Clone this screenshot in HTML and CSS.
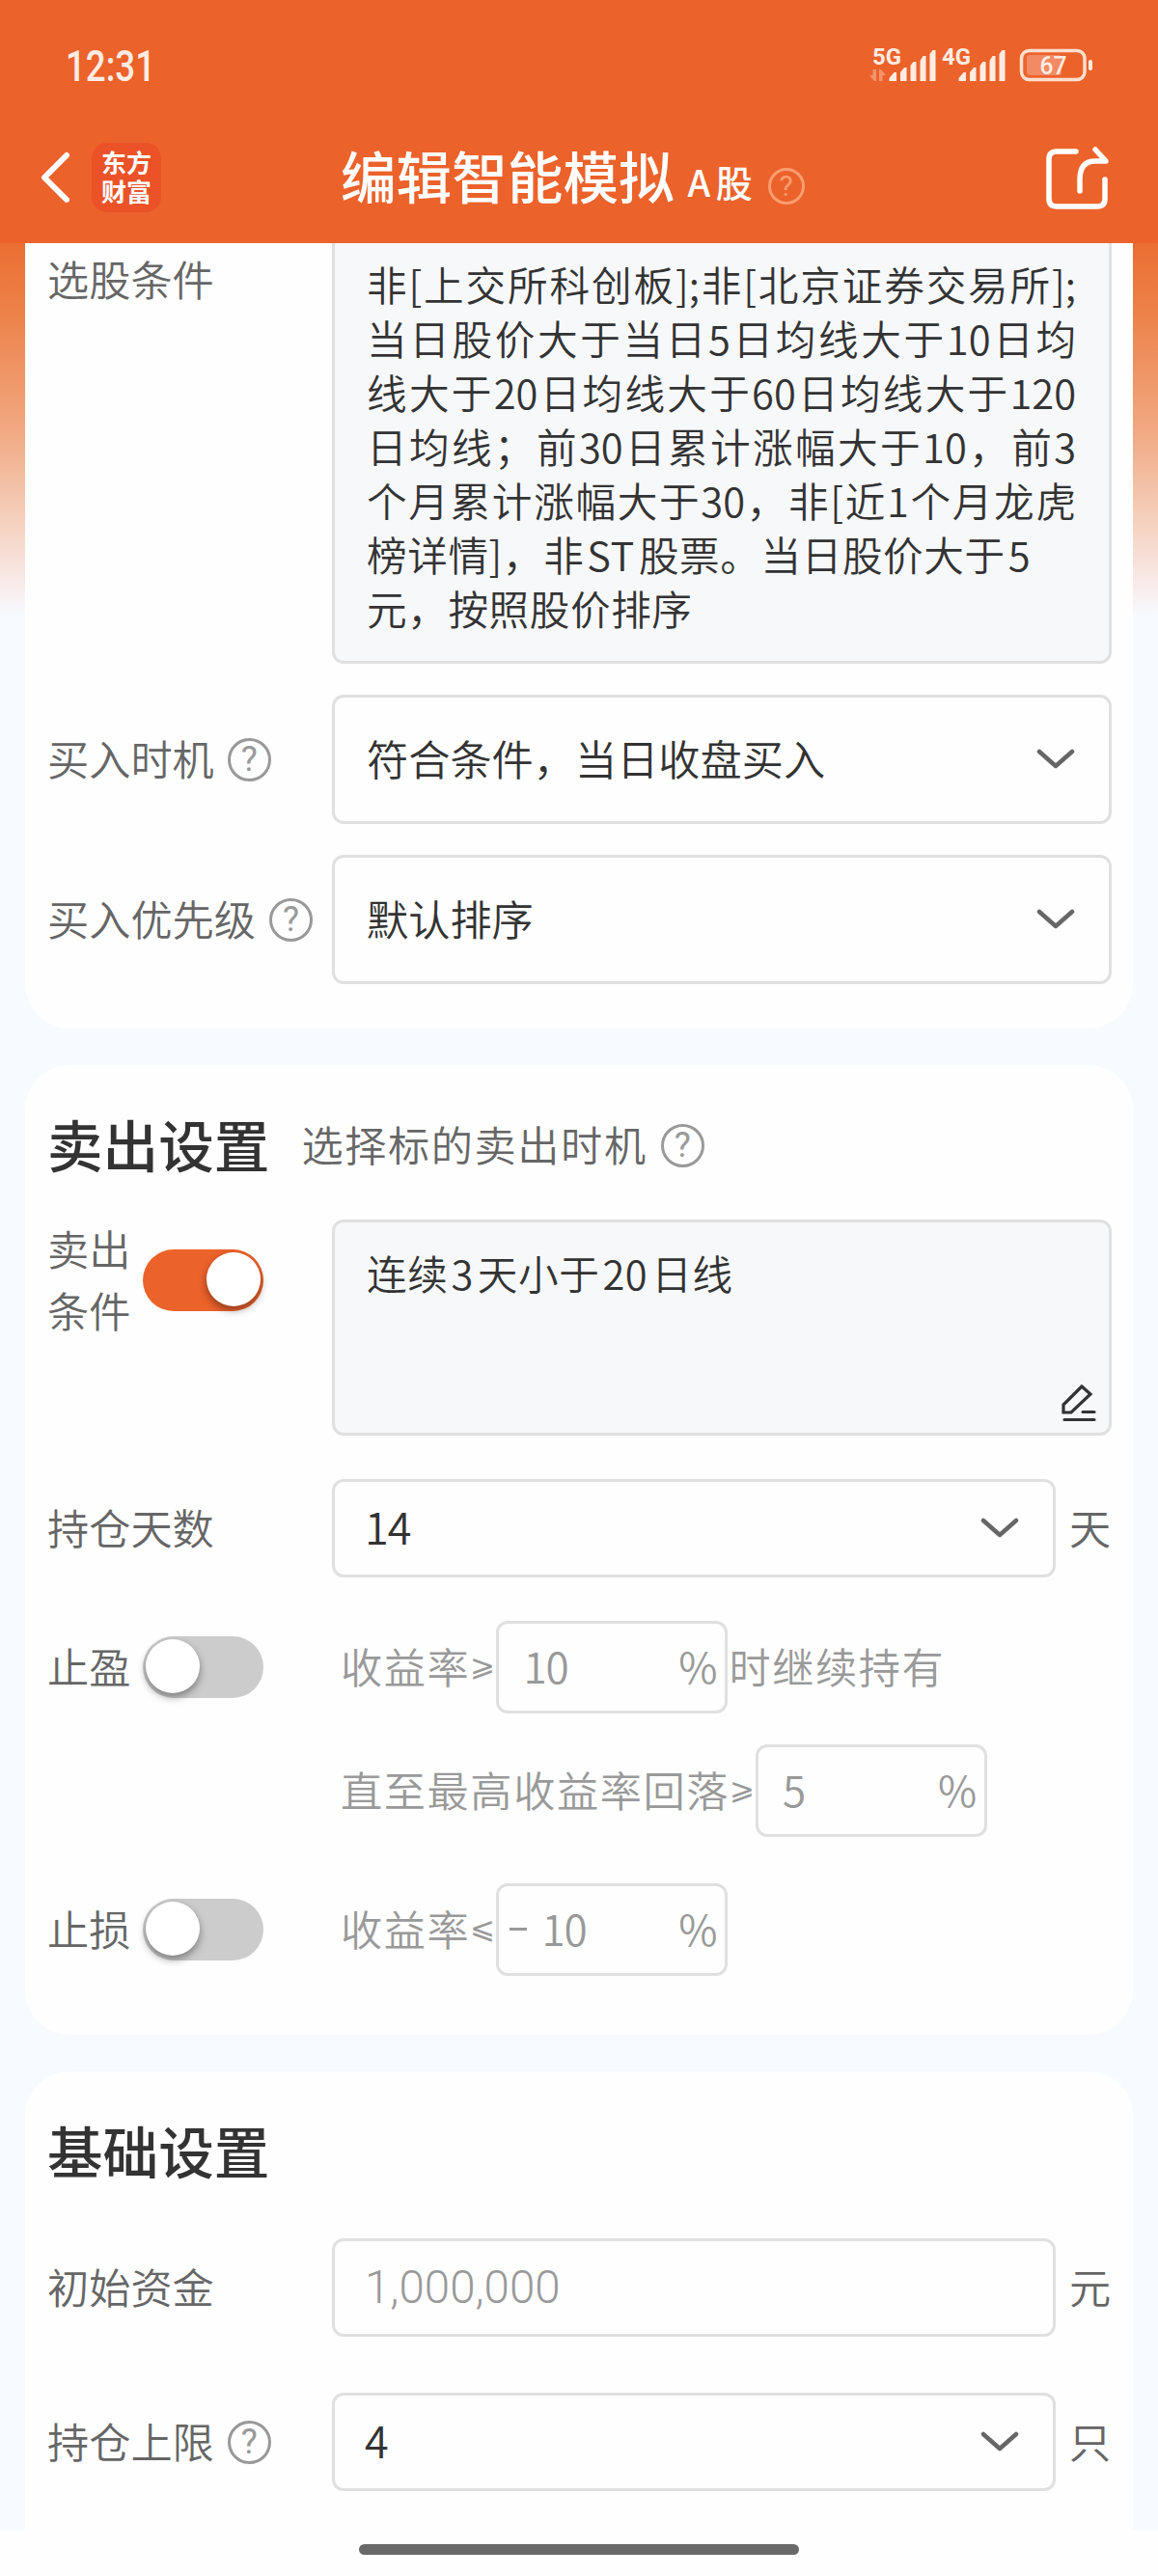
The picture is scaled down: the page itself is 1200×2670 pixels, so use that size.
FILE: index.html
```html
<!DOCTYPE html>
<html lang="zh-CN">
<head>
  <meta charset="UTF-8">
  <title>编辑智能模拟</title>
  <link rel="stylesheet" href="styles.css">
</head>
<body>
  <header>
    <div class="status-bar">
      <svg class="time" width="100" height="44" viewBox="0 0 100 44"><text x="1" y="38" textLength="93" lengthAdjust="spacingAndGlyphs">12:31</text></svg>
      <svg class="status-icons" width="232" height="40" viewBox="0 0 232 40">
        <g class="signal-text">
          <text x="3" y="19" textLength="30" lengthAdjust="spacingAndGlyphs">5G</text>
          <text x="75" y="19" textLength="30" lengthAdjust="spacingAndGlyphs">4G</text>
        </g>
        <path d="M7 24v12h-2l-5-6h3.500v-6zM10 36v-12h2l5 6h-3.500v6z" fill="#f6936a"/>
        <g fill="#ffece2">
          <path d="M20.500 36v-3l5-6h2.500v9zM32 36v-9l4-5h2.500v14zM42.500 36v-16l3-4h3v20zM52.500 36v-21l3-5h3v26zM62.500 36v-28l3-4h3v32z"/>
          <path d="M92.500 36v-3l5-6h2.500v9zM104 36v-9l4-5h2.500v14zM114.500 36v-16l3-4h3v20zM124.500 36v-21l3-5h3v26zM134.500 36v-28l3-4h3v32z"/>
          <rect x="227" y="14" width="4" height="11" rx="2"/>
        </g>
        <rect x="157.500" y="4.500" width="65.500" height="30" rx="8" fill="none" stroke="#ffe0d0" stroke-width="3.500"/>
        <rect x="163" y="9" width="36" height="21" rx="3" fill="#f28b63"/>
        <text class="battery-text" x="176.500" y="29" textLength="28" lengthAdjust="spacingAndGlyphs">67</text>
      </svg>
    </div>
    <div class="nav-bar">
      <div class="nav-left">
        <svg width="32" height="56" viewBox="0 0 32 56" fill="none" stroke="#fff" stroke-width="6" stroke-linecap="round" stroke-linejoin="round"><path d="M29 5 6 28l23 23"/></svg>
        <div class="logo">东方<br>财富</div>
      </div>
      <div class="nav-title">
        <h1>编辑智能模拟</h1>
        <span class="market">A 股</span>
        <span class="help help-light">?</span>
      </div>
      <svg class="share" width="68" height="68" viewBox="0 0 68 68" fill="none" stroke="#fff" stroke-width="5.500" stroke-linecap="round" stroke-linejoin="round">
        <path d="M32 7H12q-8 0-8 8v41q0 8 8 8h42q8 0 8-8V36"/>
        <path d="M36 48V36q0-19 16-19h11L52 5"/>
      </svg>
    </div>
  </header>

  <main>
    <section class="card card-buy">
      <div class="row row-top">
        <label class="label">选股条件</label>
        <div class="textarea condition">
          <p>非[上交所科创板];非[北京证券交易所];</p>
          <p>当日股价大于当日5日均线大于10日均</p>
          <p>线大于20日均线大于60日均线大于120</p>
          <p>日均线；前30日累计涨幅大于10，前3</p>
          <p>个月累计涨幅大于30，非[近1个月龙虎</p>
          <p class="plain">榜详情]，非<span class="num">ST</span>股票。当日股价大于<span class="num">5</span></p>
          <p class="plain">元，按照股价排序</p>
        </div>
      </div>
      <div class="row">
        <label class="label">买入时机<span class="help">?</span></label>
        <div class="select tall">符合条件，当日收盘买入<svg class="arrow" viewBox="0 0 40 22"><path d="M3 3l17 15L37 3"/></svg></div>
      </div>
      <div class="row">
        <label class="label">买入优先级<span class="help">?</span></label>
        <div class="select tall">默认排序<svg class="arrow" viewBox="0 0 40 22"><path d="M3 3l17 15L37 3"/></svg></div>
      </div>
    </section>

    <section class="card card-sell">
      <div class="card-head">
        <h2>卖出设置</h2>
        <span class="sub">选择标的卖出时机</span>
        <span class="help">?</span>
      </div>
      <div class="row row-top">
        <label class="label label-switch"><span class="two-line">卖出<br>条件</span><span class="switch on"></span></label>
        <div class="textarea sell-text">
          <p class="plain">连续<span class="num">3</span>天小于<span class="num">20</span>日线</p>
          <svg class="edit" width="38" height="42" viewBox="0 0 38 42" fill="none" stroke="#333" stroke-width="3.200" stroke-linecap="round"><path d="M22 4 3 23v8h8L31 12z"/><path d="M23 30.500h12M4 38.500h31"/></svg>
        </div>
      </div>
      <div class="row days">
        <label class="label">持仓天数</label>
        <div class="select">14<svg class="arrow" viewBox="0 0 40 22"><path d="M3 3l17 15L37 3"/></svg></div>
        <span class="unit">天</span>
      </div>
      <div class="row profit">
        <label class="label label-switch"><span>止盈</span><span class="switch"></span></label>
        <div class="rule"><span class="text">收益率</span><i>⩾</i><div class="percent"><b>10</b><span>%</span></div><span class="text after">时继续持有</span></div>
      </div>
      <div class="row fallback">
        <label class="label"></label>
        <div class="rule"><span class="text">直至最高收益率回落</span><i>⩾</i><div class="percent"><b>5</b><span>%</span></div></div>
      </div>
      <div class="row loss">
        <label class="label label-switch"><span>止损</span><span class="switch"></span></label>
        <div class="rule"><span class="text">收益率</span><i>⩽</i><div class="percent negative"><em></em><b>10</b><span>%</span></div></div>
      </div>
    </section>

    <section class="card card-base">
      <div class="card-head">
        <h2>基础设置</h2>
      </div>
      <div class="row">
        <label class="label">初始资金</label>
        <div class="select placeholder">1,000,000</div>
        <span class="unit">元</span>
      </div>
      <div class="row limit">
        <label class="label">持仓上限<span class="help">?</span></label>
        <div class="select">4<svg class="arrow" viewBox="0 0 40 22"><path d="M3 3l17 15L37 3"/></svg></div>
        <span class="unit">只</span>
      </div>
    </section>
  </main>

  <footer>
    <div class="home-bar"></div>
  </footer>
</body>
</html>
```

FILE: styles.css
```css
* {
  box-sizing: border-box;
}

body {
  margin: 0;
  width: 1200px;
  height: 2670px;
  overflow: hidden;
  display: flex;
  flex-direction: column;
  font-family: "Noto Sans CJK SC", "Noto Sans", sans-serif;
  font-size: 43.2px;
  font-weight: 350;
  line-height: 64px;
  color: #333;
  background: #fefefe;
}

h1, h2, p {
  margin: 0;
}

/* header */
header {
  height: 252px;
  flex-shrink: 0;
  background: #ec622b;
  color: #fff;
}

.status-bar {
  height: 136px;
  padding: 0 67px;
  display: flex;
  justify-content: space-between;
  align-items: center;
}

.time {
  overflow: visible;
  font: 500 45px Roboto, sans-serif;
  fill: #ffece2;
}

.status-icons {
  overflow: visible;
}

.signal-text {
  font: bold 24px Roboto, sans-serif;
  fill: #ffece2;
}

.battery-text {
  font: 500 26px Roboto, sans-serif;
  fill: #ffece2;
}

.nav-bar {
  height: 96px;
  padding: 0 49px 0 40px;
  display: grid;
  grid-template-columns: 313px 1fr 68px;
  align-items: center;
}

.nav-left {
  display: flex;
  align-items: center;
  gap: 23px;
}

.logo {
  width: 72px;
  height: 72px;
  padding-top: 5px;
  border-radius: 16px;
  background: #eb5228;
  font-size: 26px;
  font-weight: 700;
  line-height: 30px;
  text-align: center;
}

.nav-title {
  display: flex;
  align-items: center;
}

h1 {
  padding-bottom: 7px;
  font-size: 57.6px;
  font-weight: 500;
}

.market {
  margin: 8px 0 0 11px;
  width: 86px;
  padding-left: 3px;
  font-size: 38px;
  font-weight: 500;
  line-height: 50px;
  word-spacing: -3px;
}

.help {
  width: 45px;
  height: 45px;
  flex-shrink: 0;
  border: 3.5px solid #999;
  border-radius: 50%;
  display: inline-flex;
  justify-content: center;
  align-items: center;
  font-family: Roboto, sans-serif;
  font-size: 36px;
  font-weight: 400;
  line-height: 38px;
  color: #999;
}

.help-light {
  width: 38px;
  height: 38px;
  margin: 17px 0 0 0;
  border-width: 3px;
  border-color: #fb9d6f;
  color: #fb9d6f;
  font-size: 30px;
}

/* scroll area */
main {
  height: 2370px;
  flex-shrink: 0;
  overflow: hidden;
  padding: 0 26px;
  background: linear-gradient(#eb6e32, #ec8148 70px, #f1a77f 190px, #f4cdb9 280px, #f8eeee 360px, #f7fbff 388px);
}

.card {
  margin-bottom: 38px;
  padding: 0 22px 0 23px;
  border-radius: 46px;
  background: #fefefe;
}

.card-buy {
  height: 814px;
  border-radius: 0 0 46px 46px;
}

.card-sell {
  height: 1005px;
  padding-top: 48px;
}

.card-base {
  height: 560px;
  padding-top: 48px;
}

.card-head {
  height: 70px;
  display: flex;
  align-items: center;
}

h2 {
  padding-bottom: 5px;
  font-size: 57.6px;
  font-weight: 500;
}

.sub {
  margin: 0 14px 0 33px;
  padding-bottom: 4px;
  letter-spacing: 1.6px;
  color: #666;
}

.row {
  display: flex;
  align-items: center;
  margin-bottom: 32px;
}

.row-top {
  align-items: flex-start;
}

.label {
  width: 295px;
  flex-shrink: 0;
  display: flex;
  align-items: center;
  padding-bottom: 4px;
  color: #666;
}

.label .help {
  margin: 4px 0 0 14px;
}

.textarea {
  flex: 1;
  position: relative;
  border: 3px solid #e0e0e0;
  border-radius: 12px;
  background: #f7f8fa;
  padding: 0 34px 0 33px;
  font-size: 41.6px;
  line-height: 56px;
}

.textarea p {
  text-align-last: justify;
  white-space: nowrap;
}

.textarea p.plain {
  text-align-last: left;
  letter-spacing: 0.6px;
}

.num {
  margin: 0 4px 0 3px;
}

.condition {
  height: 436px;
  padding-top: 14px;
  border-top: none;
  border-radius: 0 0 12px 12px;
}

.card-buy .row-top .label {
  padding-top: 4px;
}

.select {
  flex: 1;
  height: 102px;
  border: 3px solid #e0e0e0;
  border-radius: 12px;
  padding: 0 35px 4px 31px;
  display: flex;
  justify-content: space-between;
  align-items: center;
  font-size: 45px;
  letter-spacing: -1px;
}

.select .arrow {
  margin-top: 4px;
}

.tall {
  height: 134px;
  padding-left: 33px;
  font-size: 43.2px;
  letter-spacing: 0;
}

.placeholder {
  padding-bottom: 0;
  font-family: Roboto, sans-serif;
  font-size: 47.5px;
  font-weight: 300;
  letter-spacing: 0;
  color: #999;
}

.arrow {
  width: 40px;
  height: 22px;
  fill: none;
  stroke: #666;
  stroke-width: 4.5px;
  stroke-linecap: round;
  stroke-linejoin: round;
}

.unit {
  width: 58px;
  padding: 0 0 4px 14px;
  color: #666;
}

/* sell card */
.card-sell .row-top {
  margin: 42px 0 45px;
}

.card-sell .row-top .label {
  margin-top: -3px;
}

.sell-text {
  height: 224px;
  padding-top: 24px;
}

.edit {
  position: absolute;
  right: 12px;
  bottom: 10px;
}

.label-switch {
  gap: 11px;
}

.two-line {
  flex-shrink: 0;
  white-space: nowrap;
}

.label-switch > span:first-child {
  width: 88px;
}

.switch {
  width: 125px;
  height: 64px;
  margin-top: 4px;
  padding: 3px;
  border-radius: 32px;
  background: #ccc;
  display: flex;
}

.switch::before {
  content: "";
  width: 56px;
  height: 56px;
  border-radius: 50%;
  background: #fff;
  box-shadow: 0 4px 8px rgba(0, 0, 0, 0.4);
}

.switch.on {
  background: #ec622b;
  justify-content: flex-end;
}

.days {
  margin-bottom: 45px;
}

.rule {
  display: flex;
  align-items: center;
  padding-left: 9px;
  letter-spacing: 1.6px;
  color: #999;
}

.rule .text {
  padding-bottom: 4px;
}

.rule i {
  width: 27px;
  padding-bottom: 5px;
  font-family: "DejaVu Sans", sans-serif;
  font-size: 31px;
  font-style: normal;
  letter-spacing: 0;
}

.percent {
  width: 240px;
  height: 96px;
  border: 3px solid #e0e0e0;
  border-radius: 12px;
  padding: 0 9px 4px 25px;
  display: flex;
  align-items: center;
  font-size: 44px;
  letter-spacing: -1px;
}

.percent b {
  flex: 1;
  font-weight: inherit;
}

.percent em {
  width: 18px;
  height: 3px;
  margin: 2px 15px 0 0;
  background: #999;
}

.percent.negative {
  padding-left: 11px;
}

.rule .after {
  padding-left: 1px;
}

.fallback {
  margin-bottom: 48px;
}

/* base card */
.card-base .card-head {
  margin-bottom: 55px;
}

.card-base .row {
  margin-bottom: 58px;
}

footer {
  flex: 1;
  padding-top: 15px;
}

.home-bar {
  width: 456px;
  height: 11px;
  margin: 0 auto;
  border-radius: 6px;
  background: #696969;
}
```
